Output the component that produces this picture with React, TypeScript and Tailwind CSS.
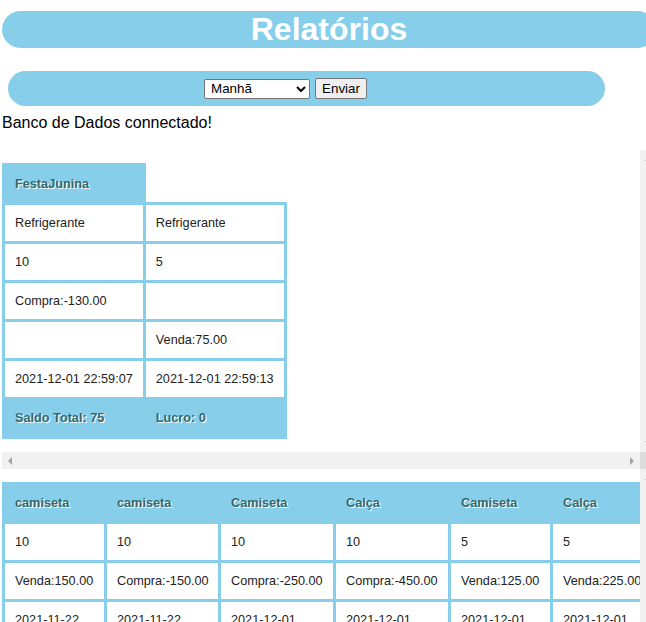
import React from "react";

const SKY = "bg-[#87ceeb]";

function Th({ children }: { children?: React.ReactNode }) {
  return (
    <th className="border-[3px] border-[#87ceeb] bg-[#87ceeb] px-[10px] py-[10px] text-left align-middle text-[12.7px] font-bold leading-[16px] text-[#336a6f] [text-shadow:1px_1px_0_#ffffff]">
      {children}
    </th>
  );
}

function Td({ children }: { children?: React.ReactNode }) {
  return (
    <td className="border-[3px] border-[#87ceeb] bg-white px-[10px] py-[10px] text-left align-middle text-[12.7px] leading-[16px] text-[#222]">
      {children}
    </td>
  );
}

function Arrow({ dir }: { dir: "left" | "right" | "up" | "down" }) {
  const pts =
    dir === "left"
      ? "5,1 5,9 1,5"
      : dir === "right"
      ? "1,1 1,9 5,5"
      : dir === "up"
      ? "1,5 9,5 5,1"
      : "1,1 9,1 5,5";
  const w = dir === "left" || dir === "right" ? 6 : 10;
  const h = dir === "left" || dir === "right" ? 10 : 6;
  return (
    <svg width={w} height={h} viewBox={`0 0 ${w} ${h}`} className="block">
      <polygon points={pts} fill="#a3a3a3" />
    </svg>
  );
}

function ScrollBox({ children }: { children: React.ReactNode }) {
  return (
    <div className="flex w-[655px]">
      <div className="flex w-[638px] flex-col">
        <div className="overflow-hidden py-[13px]">{children}</div>
        <div className="flex h-[17px] items-center justify-between bg-[#f1f1f1] px-[5px]">
          <Arrow dir="left" />
          <Arrow dir="right" />
        </div>
      </div>
      <div className="flex w-[17px] flex-col bg-[#f1f1f1]">
        <div className="flex flex-1 flex-col items-center justify-between py-[6px]">
          <Arrow dir="up" />
          <Arrow dir="down" />
        </div>
        <div className="h-[17px] bg-[#dcdcdc]" />
      </div>
    </div>
  );
}

const t2Head = ["camiseta", "camiseta", "Camiseta", "Calça", "Camiseta", "Calça", "Camiseta", "Calça"];
const t2Qty = ["10", "10", "10", "10", "5", "5", "5", "5"];
const t2Val = [
  "Venda:150.00",
  "Compra:-150.00",
  "Compra:-250.00",
  "Compra:-450.00",
  "Venda:125.00",
  "Venda:225.00",
  "Venda:125.00",
  "Venda:225.00",
];
const t2Date = [
  "2021-11-22 21:40:18",
  "2021-11-22 21:41:02",
  "2021-12-01 22:55:31",
  "2021-12-01 22:56:10",
  "2021-12-01 22:57:44",
  "2021-12-01 22:58:20",
  "2021-12-01 23:01:05",
  "2021-12-01 23:02:47",
];

export default function App() {
  return (
    <div className="h-[622px] w-[646px] overflow-hidden bg-white font-['Liberation_Sans',Arial,sans-serif] text-black">
      <div className="ml-[2px] w-[655px]">
        <h1 className={`mt-[11px] h-[37px] w-[654px] rounded-full ${SKY} text-center text-[32px] font-bold leading-[37px] text-white`}>
          Relatórios
        </h1>
        <div className={`ml-[6px] mt-[23px] flex h-[35px] w-[597px] items-center justify-center gap-[5px] rounded-full pr-[42px] ${SKY}`}>
          <select
            defaultValue="Manhã"
            className="h-[20px] w-[106px] rounded-[2px] border border-[#767676] bg-white pl-[2px] text-[13.33px] text-black"
          >
            <option>Manhã</option>
            <option>Tarde</option>
            <option>Noite</option>
          </select>
          <button className="h-[21px] rounded-[2px] border border-[#767676] bg-[#efefef] px-[6px] text-[13.33px] leading-[19px] text-black">
            Enviar
          </button>
        </div>
        <p className="mt-[8px] text-[16px] leading-[18px]">Banco de Dados connectado!</p>

        <div className="mt-[18px]">
          <ScrollBox>
            <table className="border-collapse">
              <tbody>
                <tr>
                  <Th>FestaJunina</Th>
                </tr>
                <tr>
                  <Td>Refrigerante</Td>
                  <Td>Refrigerante</Td>
                </tr>
                <tr>
                  <Td>10</Td>
                  <Td>5</Td>
                </tr>
                <tr>
                  <Td>Compra:-130.00</Td>
                  <Td></Td>
                </tr>
                <tr>
                  <Td></Td>
                  <Td>Venda:75.00</Td>
                </tr>
                <tr>
                  <Td>2021-12-01 22:59:07</Td>
                  <Td>2021-12-01 22:59:13</Td>
                </tr>
                <tr>
                  <Th>Saldo Total: 75</Th>
                  <Th>Lucro: 0</Th>
                </tr>
              </tbody>
            </table>
          </ScrollBox>
        </div>

        <ScrollBox>
          <table className="w-[820px] table-fixed border-collapse">
            <colgroup>
              <col className="w-[102px]" />
              <col className="w-[114px]" />
              <col className="w-[115px]" />
              <col className="w-[115px]" />
              <col className="w-[102px]" />
              <col className="w-[102px]" />
              <col className="w-[102px]" />
              <col className="w-[102px]" />
            </colgroup>
            <tbody>
              <tr>
                {t2Head.map((h, i) => (
                  <Th key={i}>{h}</Th>
                ))}
              </tr>
              <tr>
                {t2Qty.map((h, i) => (
                  <Td key={i}>{h}</Td>
                ))}
              </tr>
              <tr>
                {t2Val.map((h, i) => (
                  <Td key={i}>{h}</Td>
                ))}
              </tr>
              <tr>
                {t2Date.map((h, i) => (
                  <Td key={i}>{h}</Td>
                ))}
              </tr>
              <tr>
                <Th>Saldo Total: -375</Th>
                <Th>Lucro: 0</Th>
                <Th></Th>
                <Th></Th>
                <Th></Th>
                <Th></Th>
                <Th></Th>
                <Th></Th>
              </tr>
            </tbody>
          </table>
        </ScrollBox>
      </div>
    </div>
  );
}
